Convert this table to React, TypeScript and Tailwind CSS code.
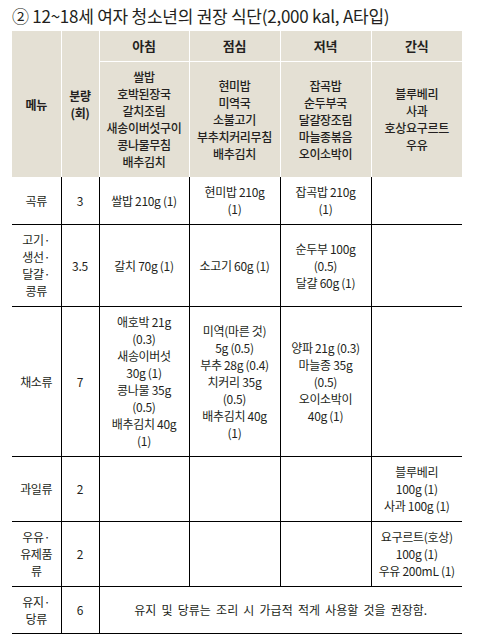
const FONT = { fontFamily: '"Noto Sans CJK KR", "Noto Sans", sans-serif' };

type Row = {
  label: string[];
  amount: string;
  cells: (string[] | null)[];
  height: string;
  note?: string;
};

const meals = ["아침", "점심", "저녁", "간식"];

const menus: string[][] = [
  ["쌀밥", "호박된장국", "갈치조림", "새송이버섯구이", "콩나물무침", "배추김치"],
  ["현미밥", "미역국", "소불고기", "부추치커리무침", "배추김치"],
  ["잡곡밥", "순두부국", "달걀장조림", "마늘종볶음", "오이소박이"],
  ["블루베리", "사과", "호상요구르트", "우유"],
];

const rows: Row[] = [
  {
    label: ["곡류"],
    amount: "3",
    height: "h-[47px]",
    cells: [["쌀밥 210g (1)"], ["현미밥 210g", "(1)"], ["잡곡밥 210g", "(1)"], null],
  },
  {
    label: ["고기·", "생선·", "달걀·", "콩류"],
    amount: "3.5",
    height: "h-[82px]",
    cells: [["갈치 70g (1)"], ["소고기 60g (1)"], ["순두부 100g", "(0.5)", "달걀 60g (1)"], null],
  },
  {
    label: ["채소류"],
    amount: "7",
    height: "h-[150px]",
    cells: [
      ["애호박 21g", "(0.3)", "새송이버섯", "30g (1)", "콩나물 35g", "(0.5)", "배추김치 40g", "(1)"],
      ["미역(마른 것)", "5g (0.5)", "부추 28g (0.4)", "치커리 35g", "(0.5)", "배추김치 40g", "(1)"],
      ["양파 21g (0.3)", "마늘종 35g", "(0.5)", "오이소박이", "40g (1)"],
      null,
    ],
  },
  {
    label: ["과일류"],
    amount: "2",
    height: "h-[65px]",
    cells: [null, null, null, ["블루베리", "100g (1)", "사과 100g (1)"]],
  },
  {
    label: ["우유·", "유제품", "류"],
    amount: "2",
    height: "h-[65px]",
    cells: [null, null, null, ["요구르트(호상)", "100g (1)", "우유 200mL (1)"]],
  },
  {
    label: ["유지·", "당류"],
    amount: "6",
    height: "h-[47px]",
    cells: [],
    note: "유지 및 당류는 조리 시 가급적 적게 사용할 것을 권장함.",
  },
];

function Lines({ lines }: { lines: string[] }) {
  return (
    <>
      {lines.map((l, i) => (
        <div key={i}>{l}</div>
      ))}
    </>
  );
}

export default function App() {
  return (
    <div className="w-[479px] h-[644px] bg-white px-[12px] pt-[4px] text-[#231f20]" style={FONT}>
      <h2 className="text-[17px] leading-[24px] font-normal tracking-[-0.25px] mb-[3px]">
        ② 12~18세 여자 청소년의 권장 식단(2,000 kal, A타입)
      </h2>
      <table className="w-[450px] table-fixed border-collapse text-[12px] leading-[17px] text-center tracking-[-0.3px]">
        <colgroup>
          <col className="w-[49px]" />
          <col className="w-[38px]" />
          <col className="w-[90px]" />
          <col className="w-[91px]" />
          <col className="w-[91px]" />
          <col className="w-[91px]" />
        </colgroup>
        <thead className="bg-[#e4e0d4]">
          <tr className="h-[30px]">
            <th rowSpan={2} className="font-bold align-middle">
              메뉴
            </th>
            <th rowSpan={2} className="font-bold align-middle border-l border-white">
              분량
              <br />
              (회)
            </th>
            {meals.map((m) => (
              <th key={m} className="font-bold text-[13px] border-l border-b border-white align-middle">
                {m}
              </th>
            ))}
          </tr>
          <tr className="h-[116px]">
            {menus.map((m, i) => (
              <td key={i} className="border-l border-white align-middle font-medium">
                <Lines lines={m} />
              </td>
            ))}
          </tr>
        </thead>
        <tbody>
          {rows.map((r, i) => (
            <tr key={i} className={`${r.height} border-b border-black`}>
              <td className="align-middle">
                <Lines lines={r.label} />
              </td>
              <td className="align-middle border-l border-black">{r.amount}</td>
              {r.note ? (
                <td colSpan={4} className="align-middle border-l border-black tracking-normal [word-spacing:2.5px]">
                  {r.note}
                </td>
              ) : (
                r.cells.map((c, j) => (
                  <td key={j} className="align-middle border-l border-black">
                    {c && <Lines lines={c} />}
                  </td>
                ))
              )}
            </tr>
          ))}
        </tbody>
      </table>
    </div>
  );
}
